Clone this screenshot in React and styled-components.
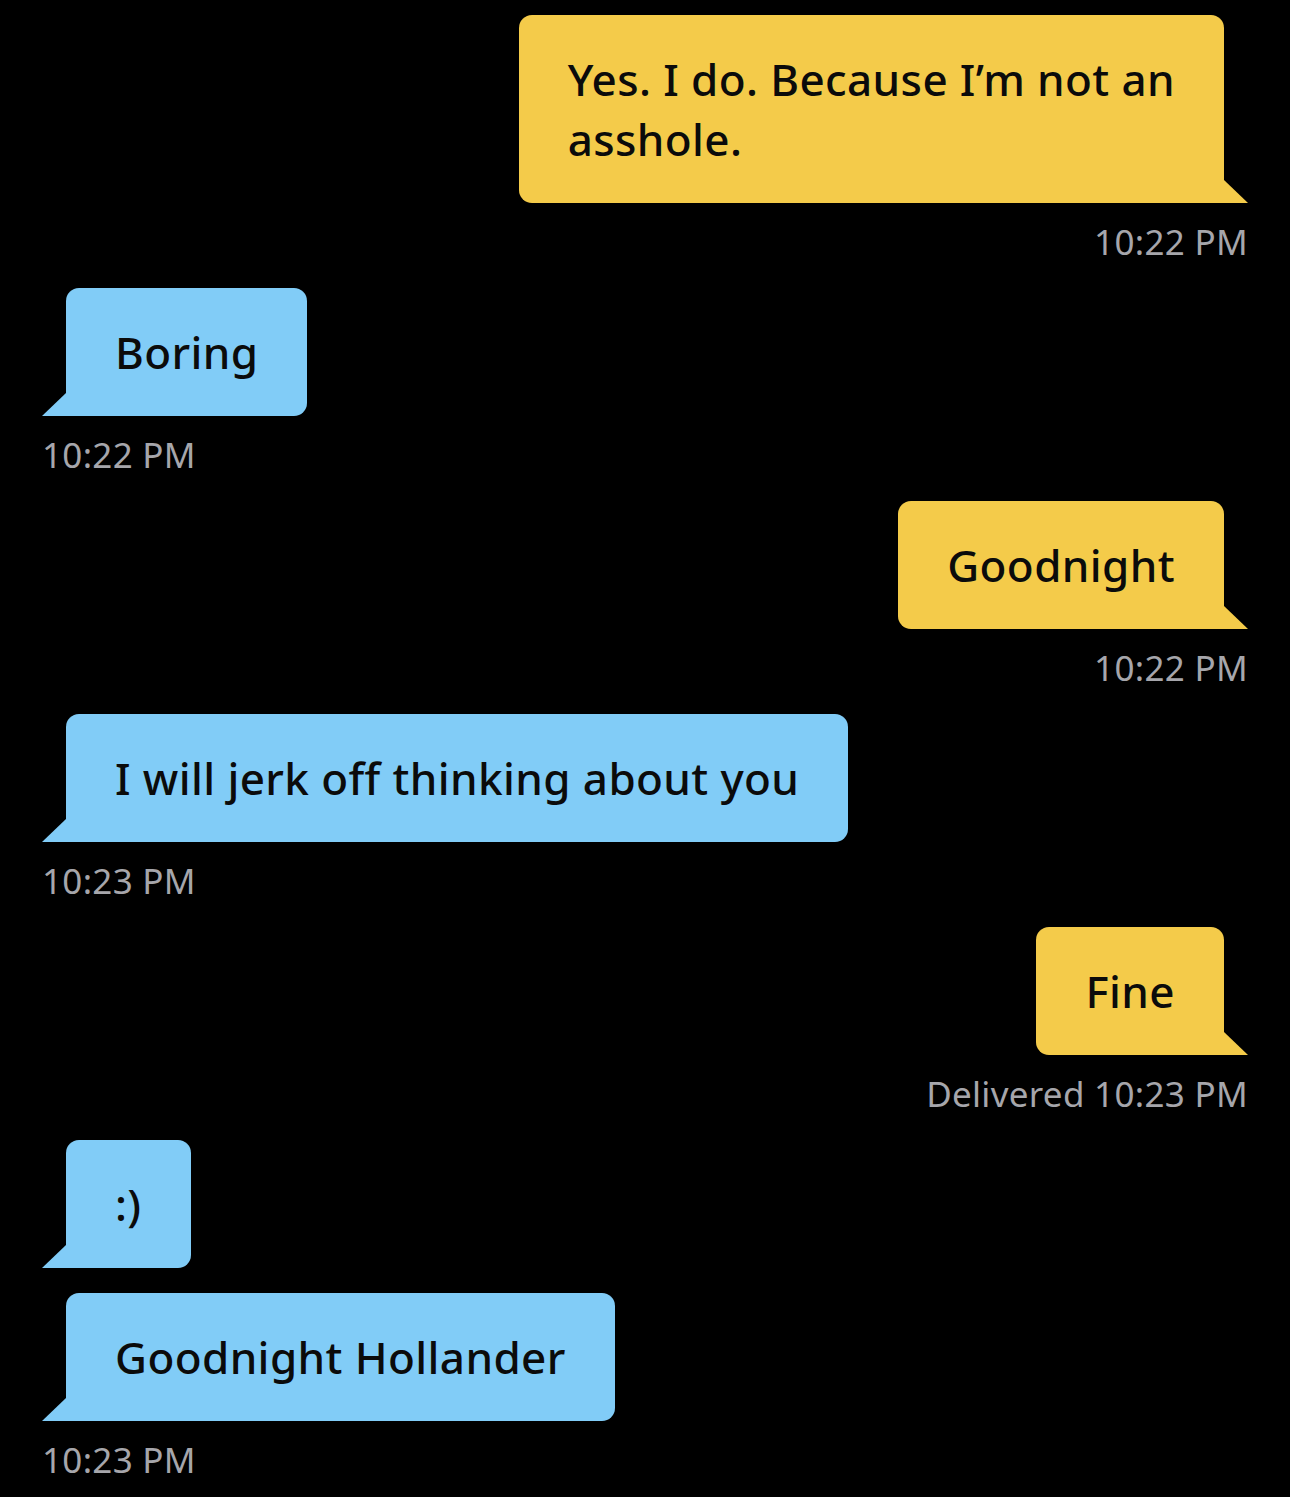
import styled, { createGlobalStyle } from 'styled-components'

const GlobalStyle = createGlobalStyle`
    body {
        margin: 0;
        background: #000000;
    }
`

const Thread = styled.div`
    display: flex;
    flex-direction: column;
    gap: 26px;
    padding: 15px 42px 20px 42px;
    background: #000000;
    min-height: 1497px;
    box-sizing: border-box;
    font-family: 'Noto Sans', 'Open Sans', sans-serif;
`

const Group = styled.div`
    display: flex;
    flex-direction: column;
    gap: 25px;
    align-items: ${({mine}) => mine ? 'flex-end' : 'flex-start'};
`

const Bubble = styled.div`
    position: relative;
    background-color: ${({mine}) => mine ? '#F4CB4A' : '#81CCF7'};
    color: #0B0B0B;
    font-size: 44px;
    font-weight: 500;
    letter-spacing: 0.4px;
    line-height: 60px;
    white-space: nowrap;
    padding: 34px 49px;
    margin: ${({mine}) => mine ? '0 24px 0 0' : '0 0 0 24px'};
    border-radius: ${({mine}) => mine ? '13px 13px 0 13px' : '13px 13px 13px 0'};

    &::after {
        content: '';
        position: absolute;
        bottom: 0;
        width: 24px;
        height: 23px;
        background-color: inherit;
        ${({mine}) => mine
            ? 'right: -24px; clip-path: polygon(0 0, 100% 100%, 0 100%);'
            : 'left: -24px; clip-path: polygon(100% 0, 100% 100%, 0 100%);'}
    }
`

const Line = styled.div``

const Time = styled.div`
    margin-top: -6px;
    font-size: 35px;
    line-height: 40px;
    font-weight: 400;
    letter-spacing: 0.3px;
    color: #A6A6AB;
`

const messages = [
    {mine: true, bubbles: [['Yes. I do. Because I’m not an', 'asshole.']], time: '10:22 PM'},
    {mine: false, bubbles: [['Boring']], time: '10:22 PM'},
    {mine: true, bubbles: [['Goodnight']], time: '10:22 PM'},
    {mine: false, bubbles: [['I will jerk off thinking about you']], time: '10:23 PM'},
    {mine: true, bubbles: [['Fine']], time: 'Delivered 10:23 PM'},
    {mine: false, bubbles: [[':)'], ['Goodnight Hollander']], time: '10:23 PM'},
]

const App = () => {
    return (
        <>
            <GlobalStyle />
            <Thread>
                {
                    messages.map((message, index) => (
                        <Group key={index} mine={message.mine}>
                            {message.bubbles.map(lines => (
                                <Bubble key={lines[0]} mine={message.mine}>
                                    {lines.map(line => <Line key={line}>{line}</Line>)}
                                </Bubble>
                            ))}
                            <Time>{message.time}</Time>
                        </Group>
                    ))
                }
            </Thread>
        </>
    )
}

export default App
